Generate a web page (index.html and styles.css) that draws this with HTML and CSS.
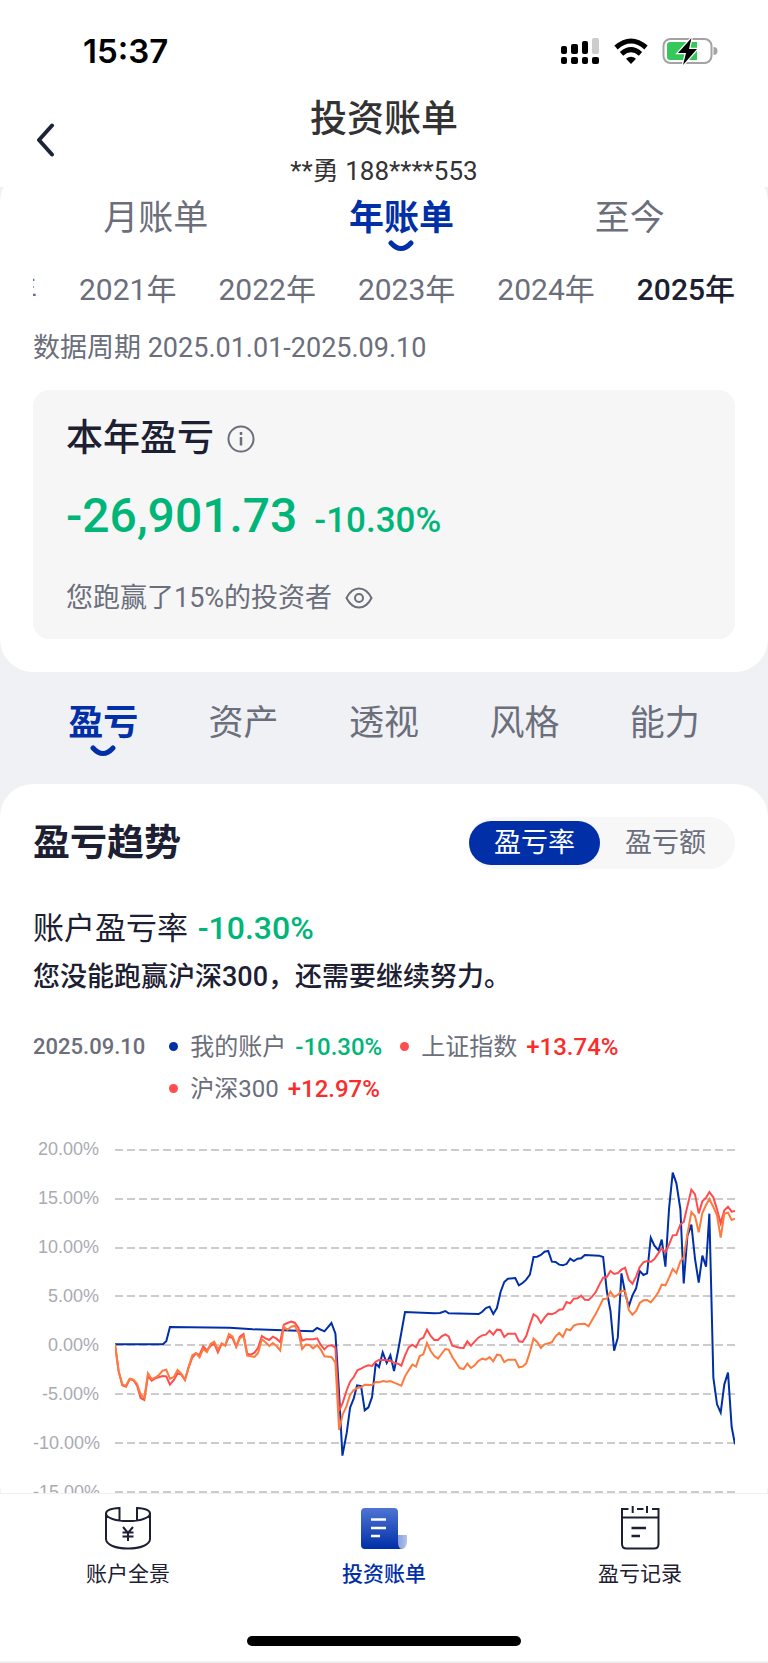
FILE: index.html
```html
<!DOCTYPE html>
<html lang="zh-CN">
<head>
    <meta charset="UTF-8">
    <meta name="viewport" content="width=device-width, initial-scale=1.0">
    <title>投资账单</title>
    <link rel="stylesheet" href="styles.css">
</head>
<body>
    <div class="app">
        <header class="header">
            <div class="status">
                <span class="time">15:37</span>
                <div class="status-icons">
                    <svg width="40" height="28" viewBox="0 0 40 28">
                        <rect x="1" y="9" width="6" height="8" rx="2"/>
                        <rect x="11" y="7" width="7" height="10" rx="2"/>
                        <rect x="22" y="4" width="6" height="13" rx="2"/>
                        <rect x="32" y="1" width="7" height="16" rx="2" fill="#ccc"/>
                        <rect x="1" y="20" width="6" height="7" rx="2"/>
                        <rect x="11" y="20" width="7" height="7" rx="2"/>
                        <rect x="22" y="20" width="6" height="7" rx="2"/>
                        <rect x="32" y="20" width="7" height="7" rx="2"/>
                    </svg>
                    <svg width="34" height="28" viewBox="0 0 34 28" fill="none" stroke="#000" stroke-width="5">
                        <path d="M2 10.500Q17-2.500 32 10.500"/>
                        <path d="M7.500 16.800Q17 8.500 26.500 16.800"/>
                        <path d="M17 27L12 21.800Q17 17.500 22 21.800Z" fill="#000" stroke="none"/>
                    </svg>
                    <svg width="56" height="28" viewBox="0 0 56 28">
                        <rect x="1.500" y="2" width="48" height="24" rx="7" fill="#fff" stroke="#a3a3a3" stroke-width="2"/>
                        <path d="M8 5H35V23H8a3 3 0 0 1-3-3V8a3 3 0 0 1 3-3Z" fill="#34c759"/>
                        <path d="M51.500 10a4 4 0 0 1 0 8Z" fill="#a3a3a3"/>
                        <path d="M29.500 1L16 16H24L21 28L35 12H27Z" stroke="#fff" stroke-width="2.500" paint-order="stroke"/>
                    </svg>
                </div>
            </div>
            <div class="nav-bar">
                <button class="back" aria-label="返回">
                    <svg width="20" height="34" viewBox="0 0 20 34" fill="none" stroke="#1c2438" stroke-width="4" stroke-linecap="round" stroke-linejoin="round"><path d="M17 2.500L4 17L17 31.500"/></svg>
                </button>
                <div class="nav-title">
                    <h1>投资账单</h1>
                    <p>**勇 188****553</p>
                </div>
            </div>
        </header>

        <main class="content">
            <section class="sheet summary">
                <nav class="tabs period-tabs">
                    <a href="#month">月账单</a>
                    <a href="#year" class="active">年账单
                        <svg class="smile" width="26" height="12" viewBox="0 0 26 12"><path d="M3 3Q13 14 23 3"/></svg>
                    </a>
                    <a href="#all">至今</a>
                </nav>
                <div class="years">
                    <a href="#2020">年</a>
                    <a href="#2021">2021年</a>
                    <a href="#2022">2022年</a>
                    <a href="#2023">2023年</a>
                    <a href="#2024">2024年</a>
                    <a href="#2025" class="active">2025年</a>
                </div>
                <p class="range">数据周期 2025.01.01-2025.09.10</p>
                <div class="card">
                    <h2>本年盈亏
                        <svg width="28" height="28" viewBox="0 0 28 28" fill="none" stroke="#6b6e7b" stroke-width="2"><circle cx="14" cy="14" r="12.500"/><path d="M14 12V20.500M14 7V10" stroke-width="2.500"/></svg>
                    </h2>
                    <p class="amount">-26,901.73 <span>-10.30%</span></p>
                    <p class="rank">您跑赢了15%的投资者
                        <svg width="28" height="22" viewBox="0 0 28 22" fill="none" stroke="#6b6e7b" stroke-width="2"><path d="M1.500 11C5 4 9 1.500 14 1.500S23 4 26.500 11C23 18 19 20.500 14 20.500S5 18 1.500 11Z"/><circle cx="14" cy="11" r="4"/></svg>
                    </p>
                </div>
            </section>

            <nav class="tabs section-tabs">
                <a href="#profit" class="active">盈亏
                    <svg class="smile" width="26" height="12" viewBox="0 0 26 12"><path d="M3 3Q13 14 23 3"/></svg>
                </a>
                <a href="#asset">资产</a>
                <a href="#insight">透视</a>
                <a href="#style">风格</a>
                <a href="#ability">能力</a>
            </nav>

            <section class="sheet trend">
                <div class="trend-head">
                    <h2>盈亏趋势</h2>
                    <div class="switch">
                        <button class="on">盈亏率</button>
                        <button>盈亏额</button>
                    </div>
                </div>
                <p class="rate">账户盈亏率 <span class="down">-10.30%</span></p>
                <p class="comment">您没能跑赢沪深300，还需要继续努力。</p>
                <div class="legend">
                    <time>2025.09.10</time>
                    <ul>
                        <li><i class="dot blue"></i>我的账户 <b class="down">-10.30%</b></li>
                        <li><i class="dot"></i>上证指数 <b class="up">+13.74%</b></li>
                        <li><i class="dot"></i>沪深300 <b class="up">+12.97%</b></li>
                    </ul>
                </div>
                <div class="chart">
                    <ul class="axis">
                        <li>20.00%</li>
                        <li>15.00%</li>
                        <li>10.00%</li>
                        <li>5.00%</li>
                        <li>0.00%</li>
                        <li>-5.00%</li>
                        <li>-10.00%</li>
                        <li>-15.00%</li>
                    </ul>
                    <svg class="plot" viewBox="346 0 1862 1140" preserveAspectRatio="none">
                        <path class="grid" d="M346 87H2208M346 234H2208M346 381H2208M346 525H2208M346 672H2208M346 819H2208M346 966H2208M346 1113H2208"/>
                        <polyline class="line account" points="346,670 490,670 500,661 511,618 690,620 760,625 850,628 940,631 953,621 975,631 996,606 1008,638 1018,800 1029,1004 1042,935 1052,860 1063,832 1073,793 1085,795 1096,868 1107,859 1118,828 1129,728 1139,738 1150,694 1162,726 1173,703 1184,750 1196,690 1217,573 1305,577 1322,576 1338,570 1348,577 1438,579 1448,573 1460,561 1471,557 1482,579 1493,561 1504,513 1515,483 1526,473 1548,471 1559,493 1570,486 1581,476 1592,461 1603,408 1614,407 1625,402 1636,392 1647,390 1658,422 1669,423 1680,431 1691,433 1702,429 1713,413 1724,420 1735,413 1746,412 1757,402 1800,404 1812,408 1823,510 1834,570 1845,689 1856,650 1867,457 1878,516 1889,556 1900,523 1911,502 1922,450 1933,462 1944,457 1955,350 1966,374 1978,388 1988,356 1999,437 2010,262 2021,155 2032,187 2044,265 2054,487 2065,345 2077,311 2088,414 2099,485 2110,404 2121,437 2131,278 2143,770 2154,850 2165,875 2176,790 2187,755 2198,918 2208,970"/>
                        <polyline class="line sse" points="346,670 357,752 368,793 379,797 390,775 401,777 412,793 423,831 434,837 445,765 456,779 467,772 489,765 500,766 511,791 523,777 534,757 545,761 556,777 567,740 578,710 589,698 600,702 611,676 622,688 633,675 644,668 655,694 666,669 677,673 688,647 699,651 710,677 721,647 732,639 743,698 754,701 765,695 776,680 787,645 798,652 809,657 820,647 831,653 842,663 853,611 864,606 875,602 886,605 897,621 908,659 919,655 941,655 953,652 964,672 975,685 986,674 997,673 1008,680 1019,870 1030,845 1041,810 1052,782 1063,768 1074,748 1085,743 1096,737 1107,733 1118,735 1129,722 1140,716 1162,718 1173,720 1184,725 1196,728 1206,734 1217,703 1228,679 1239,671 1250,679 1261,656 1272,650 1283,626 1294,645 1305,657 1316,657 1327,646 1338,640 1348,646 1359,674 1381,680 1393,681 1404,661 1415,674 1437,650 1449,643 1460,641 1471,629 1482,641 1493,626 1504,627 1515,648 1526,638 1548,638 1559,661 1570,663 1581,645 1592,611 1603,580 1614,587 1625,606 1636,590 1647,578 1658,580 1669,575 1680,566 1691,565 1702,543 1713,547 1724,533 1735,532 1746,524 1757,536 1768,537 1779,527 1790,513 1801,490 1812,470 1823,468 1834,450 1845,459 1856,456 1867,446 1878,440 1889,476 1900,488 1911,467 1922,438 1933,424 1944,420 1955,423 1966,414 1977,398 1988,382 1999,394 2010,370 2021,343 2032,342 2044,310 2054,303 2065,256 2077,206 2088,220 2099,277 2110,241 2121,230 2131,213 2143,229 2154,265 2165,307 2176,268 2187,257 2198,272 2208,270"/>
                        <polyline class="line csi" points="346,670 357,750 368,790 379,795 390,773 401,776 412,788 423,820 434,831 445,757 456,774 467,770 478,762 489,749 500,746 511,773 523,768 534,747 545,758 556,776 567,738 578,703 589,696 600,709 611,683 622,693 633,669 644,662 655,686 666,667 677,674 688,639 699,646 710,677 721,652 732,645 743,704 765,708 776,695 787,655 798,664 809,675 820,666 831,675 842,688 853,618 864,626 875,617 886,614 897,635 908,684 919,671 930,672 941,682 953,672 964,686 975,706 996,708 1008,725 1019,927 1030,880 1041,856 1052,822 1063,807 1074,801 1085,799 1096,791 1118,792 1129,783 1140,784 1151,780 1162,782 1173,780 1184,785 1206,794 1217,766 1228,748 1239,731 1250,737 1261,705 1272,700 1283,666 1294,690 1305,705 1316,713 1338,684 1348,686 1359,708 1381,741 1393,744 1404,728 1415,741 1426,733 1437,720 1449,713 1460,716 1471,708 1482,721 1493,701 1504,703 1515,723 1526,716 1548,716 1559,739 1570,737 1581,727 1592,693 1603,653 1614,663 1625,681 1636,670 1658,664 1669,646 1680,636 1691,648 1702,624 1713,628 1724,614 1735,610 1757,608 1768,616 1790,578 1801,557 1812,534 1823,533 1834,512 1845,528 1856,522 1867,510 1878,510 1889,567 1900,581 1911,570 1922,546 1933,538 1944,537 1955,544 1966,531 1977,515 1988,491 1999,493 2010,470 2021,444 2032,456 2044,421 2054,409 2065,340 2077,273 2088,286 2099,334 2110,276 2121,252 2131,234 2143,258 2154,283 2165,350 2176,278 2187,275 2198,297 2208,293"/>
                    </svg>
                </div>
            </section>
        </main>

        <footer class="footer">
            <nav class="tab-bar">
                <a href="#overview">
                    <svg width="48" height="48" viewBox="0 0 48 48" fill="none" stroke="#1c2032" stroke-width="2"><path d="M15.500 16V4C8 4.500 2 6.500 2 9.500C2 14 12 17 24 17S46 14 46 9.500C46 6.500 41 4.500 33 4V16M2 9.500V35C2 41 12 44.500 24 44.500S46 41 46 35V9.500"/><path d="M19 23L24 29L29 23M24 29V37M18.500 28.500H29.500M18.500 32.500H29.500"/></svg>
                    账户全景
                </a>
                <a href="#bill" class="active">
                    <svg width="48" height="48" viewBox="0 0 48 48">
                        <defs>
                            <linearGradient id="bill" x1="0" y1="0" x2="0" y2="1"><stop offset="0" stop-color="#4f74d3"/><stop offset="1" stop-color="#002fa7"/></linearGradient>
                            <linearGradient id="fold"><stop offset="0" stop-color="#7f98d8"/><stop offset="1" stop-color="#b4c3ea"/></linearGradient>
                        </defs>
                        <path d="M38 31H47V38Q46 45 42 45H36Z" fill="url(#fold)"/>
                        <path d="M5 4H34Q38 4 38 8V38Q38 45 42 45H5Q1 45 1 41V8Q1 4 5 4Z" fill="url(#bill)"/>
                        <path d="M11 15.500H26M11 24H26M11 32H20" stroke="#fff" stroke-width="2.500"/>
                    </svg>
                    投资账单
                </a>
                <a href="#record">
                    <svg width="48" height="48" viewBox="0 0 48 48" fill="none" stroke="#1c2032" stroke-width="2"><path d="M12.500 5H6V40Q6 44.500 10.500 44.500H38Q42.500 44.500 42.500 40V5H36M21 5H27.500M16.700 2V9M31 2V9M6 13.500H42.500"/><path d="M15.500 24H30M15.500 32H24" stroke-width="2.500"/></svg>
                    盈亏记录
                </a>
            </nav>
            <div class="home-bar"></div>
        </footer>
    </div>
</body>
</html>
```
FILE: styles.css
```css
* {
    box-sizing: border-box;
}
body {
    margin: 0;
    font-family: Roboto, "Noto Sans CJK SC", sans-serif;
    color: #1c2032;
    background: #f0f1f5;
}
h1, h2, p, ul {
    margin: 0;
    padding: 0;
}
h1, h2 {
    font-weight: 500;
}
ul {
    list-style: none;
}
a {
    color: #6b6e7b;
    text-decoration: none;
}
button {
    border: 0;
    padding: 0;
    background: none;
    font-family: inherit;
    cursor: pointer;
}
svg {
    display: block;
    flex: none;
}
.app {
    display: flex;
    flex-direction: column;
    height: 100vh;
    overflow: hidden;
}

/* header */
.header {
    position: relative;
    z-index: 1;
    flex: none;
    background: #fff;
}
.status {
    display: flex;
    justify-content: space-between;
    align-items: center;
    height: 102px;
    padding: 0 50px 0 83px;
}
.time {
    font: 600 33px Inter, sans-serif;
    color: #000;
}
.status-icons {
    display: flex;
    gap: 14px;
}
.nav-bar {
    display: flex;
    align-items: flex-start;
    padding: 0 35px;
}
.back {
    width: 20px;
    margin-top: 21px;
}
.nav-title {
    flex: 1;
    margin-right: 20px;
    text-align: center;
    color: #333;
}
.nav-title h1 {
    margin-top: -10px;
    font-size: 37px;
    line-height: 56px;
}
.nav-title p {
    margin-top: 7px;
    font-size: 26px;
    line-height: 32px;
}

/* scrolling content */
.content {
    flex: 1;
    min-height: 0;
    overflow: hidden;
    margin-top: -18px;
}
.sheet {
    background: #fff;
    border-radius: 33px;
    padding: 33px;
}
.tabs a {
    position: relative;
    font-size: 35px;
    line-height: 50px;
}
.tabs .active {
    color: #002fa7;
    font-weight: 700;
}
.smile {
    position: absolute;
    left: 50%;
    bottom: -8px;
    margin-left: -13px;
    fill: none;
    stroke: #002fa7;
    stroke-width: 5;
    stroke-linecap: round;
}
.summary {
    padding-top: 25px;
}
.period-tabs {
    display: flex;
    justify-content: space-around;
}
.years {
    display: flex;
    justify-content: flex-end;
    gap: 42px;
    margin-top: 26px;
    overflow: hidden;
    font-size: 30px;
    line-height: 40px;
    white-space: nowrap;
}
.years .active {
    color: #1c2032;
    font-weight: 500;
}
.range {
    margin-top: 18px;
    font-size: 27px;
    line-height: 40px;
    color: #6b6e7b;
}
.card {
    margin-top: 22px;
    padding: 24px 33px 21px;
    border-radius: 16px;
    background: #f6f6f6;
}
.card h2 {
    display: flex;
    align-items: center;
    gap: 13px;
    font-size: 37px;
    line-height: 50px;
}
.amount {
    margin-top: 22px;
    font-size: 48px;
    font-weight: 500;
    line-height: 60px;
    color: #00b578;
}
.amount span {
    margin-left: 5px;
    font-size: 35px;
}
.rank {
    display: flex;
    align-items: center;
    gap: 13px;
    margin-top: 27px;
    font-size: 27px;
    line-height: 40px;
    color: #6b6e7b;
}
.section-tabs {
    display: grid;
    grid-template-columns: repeat(5, 1fr);
    padding: 27px 33px 35px;
    text-align: center;
}
.trend {
    padding-bottom: 0;
}
.trend-head {
    display: flex;
    justify-content: space-between;
    align-items: center;
}
.trend-head h2 {
    padding-top: 2px;
    font-size: 37px;
    font-weight: 700;
    line-height: 50px;
}
.switch {
    display: flex;
    padding: 4px 4px 4px 0;
    border-radius: 26px;
    background: #f7f7f7;
}
.switch button {
    width: 131px;
    height: 44px;
    border-radius: 22px;
    font-size: 27px;
    line-height: 40px;
    color: #6b6e7b;
}
.switch .on {
    background: #002fa7;
    color: #fff;
}
.down {
    color: #00b578;
}
.up {
    color: #fa2c2c;
}
.rate {
    margin-top: 35px;
    font-size: 31px;
    line-height: 48px;
}
.rate span {
    margin-left: 2px;
    font-size: 32px;
    font-weight: 500;
}
.comment {
    margin-top: 4px;
    font-size: 27px;
    font-weight: 500;
    line-height: 40px;
}
.legend {
    display: flex;
    gap: 24px;
    margin-top: 29px;
    font-size: 24px;
    line-height: 42px;
    color: #6b6e7b;
}
.legend time {
    font-size: 22px;
    font-weight: 500;
}
.legend ul {
    display: flex;
    flex-wrap: wrap;
    flex: 1;
    column-gap: 18px;
}
.legend b {
    margin-left: 3px;
    font-size: 24px;
    font-weight: 500;
}
.dot {
    display: inline-block;
    width: 9px;
    height: 9px;
    margin-right: 12px;
    border-radius: 50%;
    background: #ff4d4f;
    vertical-align: 4px;
}
.dot.blue {
    background: #002fa7;
}
.chart {
    display: flex;
    gap: 16px;
    margin-top: 11px;
}
.axis {
    width: 66px;
    padding-top: 4px;
    font: 18px "Liberation Sans", sans-serif;
    line-height: 49px;
    text-align: right;
    color: #a9abb3;
}
.plot {
    flex: 1;
    min-width: 0;
    height: 380px;
}
.grid, .line {
    fill: none;
    stroke-width: 2px;
    vector-effect: non-scaling-stroke;
}
.grid {
    stroke: #ccc;
    stroke-dasharray: 8 4;
}
.account {
    stroke: #002fa7;
}
.sse {
    stroke: #ff4d4f;
}
.csi {
    stroke: #ff7a3d;
}

/* bottom bar */
.footer {
    flex: none;
    border-top: 1px solid #f0f0f0;
    border-bottom: 2px solid #f0f0f0;
    background: #fff;
}
.tab-bar {
    display: grid;
    grid-template-columns: repeat(3, 1fr);
}
.tab-bar a {
    display: flex;
    flex-direction: column;
    align-items: center;
    gap: 7px;
    padding-top: 10px;
    font-size: 21px;
    line-height: 30px;
    color: #1c2032;
}
.tab-bar .active {
    color: #002fa7;
    font-weight: 500;
}
.home-bar {
    width: 274px;
    height: 10px;
    margin: 47px auto 15px;
    border-radius: 5px;
    background: #000;
}
```
